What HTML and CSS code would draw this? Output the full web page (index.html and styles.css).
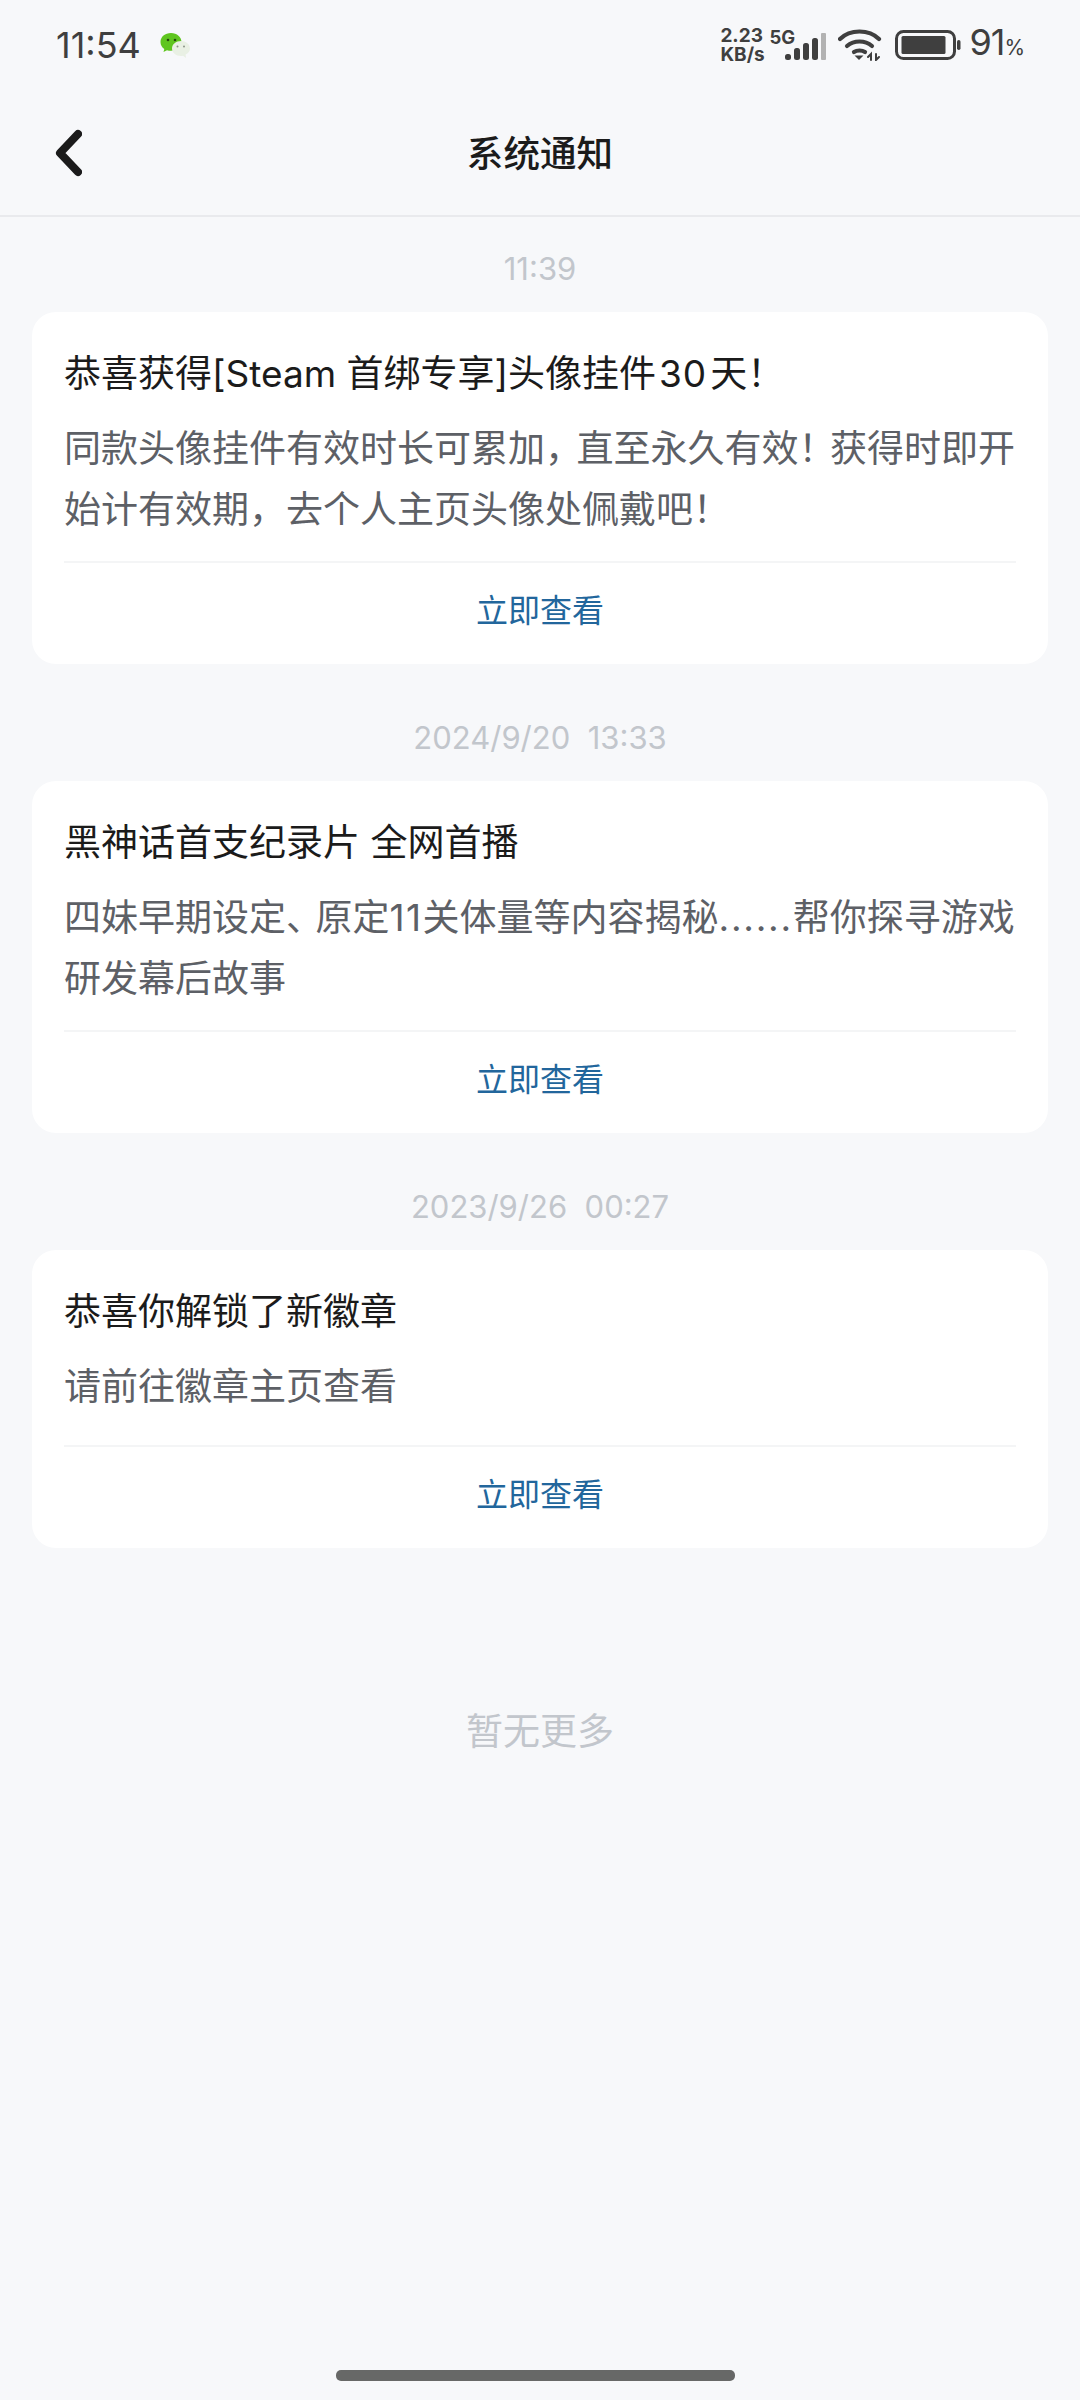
FILE: index.html
```html
<!DOCTYPE html>
<html lang="zh-CN">
<head>
<meta charset="utf-8">
<title>系统通知</title>
<link rel="stylesheet" href="styles.css">
</head>
<body>
<div class="status">
  <div class="status-left">
    <span class="clock">11:54</span>
    <svg class="wechat" width="32" height="28" viewBox="0 0 32 28">
      <path d="M11 1C5 1 .5 4.800.5 10c0 3 1.500 5.400 3.800 7l-.8 3 3.500-1.800c1.200.4 2.500.6 4 .6 6 0 10.500-4 10.500-8.800S17 1 11 1z" fill="#5fc51f"/>
      <circle cx="8" cy="8" r="1.300" fill="#24480c"/><circle cx="15" cy="8" r="1.300" fill="#24480c"/>
      <path d="M21 9c-5 0-9 3.400-9 7.500S16 24 21 24c.7 0 1.400-.1 2-.3l3 2.300-.4-3.400c2.700-1.300 4.400-3.400 4.400-6.100C30 12.400 26 9 21 9z" fill="#e9f0e4"/>
      <circle cx="17.500" cy="14.500" r="1" fill="#8c9488"/><circle cx="24" cy="14.500" r="1" fill="#8c9488"/>
    </svg>
  </div>
  <div class="status-right">
    <div class="speed"><span>2.23</span><span>KB/s</span></div>
    <div class="signal">
      <span class="net">5G</span>
      <svg width="41" height="27" viewBox="0 0 41 27" class="bars">
        <rect x="0" y="21" width="6" height="6" rx="2.500" fill="#3f3f3f"/>
        <rect x="9" y="15" width="6" height="12" rx="2.500" fill="#3f3f3f"/>
        <rect x="18" y="10" width="6" height="17" rx="2.500" fill="#3f3f3f"/>
        <rect x="27" y="5" width="6" height="22" rx="2.500" fill="#3f3f3f"/>
        <rect x="36" y="0" width="5" height="27" rx="1" fill="#b2b2b2"/>
      </svg>
    </div>
    <svg class="wifi" width="44" height="32" viewBox="0 0 44 32" fill="none" stroke="#3f3f3f" stroke-width="4.200" stroke-linecap="round">
      <path d="M2 10C12 0 31 0 41 10"/>
      <path d="M9 17c7-6 18-6 25 0"/>
      <path d="M16 23c3-2 8-2 11 0"/>
      <path d="M16.500 26.500h9l-4.500 4.500z" fill="#3f3f3f" stroke="none"/>
      <path d="M33 31v-6l-3 3M38 25v6l3-3" stroke-width="2"/>
    </svg>
    <svg class="battery" width="66" height="30" viewBox="0 0 66 30">
      <rect x="1.500" y="1.500" width="58" height="27" rx="7" fill="none" stroke="#3f3f3f" stroke-width="3"/>
      <rect x="6.500" y="6" width="44" height="18" rx="1.500" fill="#3f3f3f"/>
      <rect x="62" y="10" width="3.500" height="10" rx="1.700" fill="#3f3f3f"/>
    </svg>
    <div class="percent">91<span>%</span></div>
  </div>
</div>

<header class="nav">
  <svg class="back" width="28" height="48" viewBox="0 0 28 48" fill="none" stroke="#1b1b1b" stroke-width="8" stroke-linecap="round" stroke-linejoin="round">
    <path d="M24 5L6 24 24 43"/>
  </svg>
  <h1 class="nav-title">系统通知</h1>
</header>

<main class="list">
  <section class="item">
    <time class="stamp">11:39</time>
    <article class="card">
      <h2 class="card-title">恭喜获得[Steam 首绑专享]头像挂件<span class="num">30</span>天！</h2>
      <p class="card-body">
        <span class="line">同款头像挂件有效时长可累加<span class="tight">，</span>直至永久有效<span class="tight">！</span>获得时即开</span>
        <span class="line">始计有效期，去个人主页头像处佩戴吧！</span>
      </p>
      <a class="card-link">立即查看</a>
    </article>
  </section>
  <section class="item">
    <time class="stamp">2024/9/20&nbsp; 13:33</time>
    <article class="card">
      <h2 class="card-title">黑神话首支纪录片 全网首播</h2>
      <p class="card-body">
        <span class="line">四妹早期设定<span class="tighter">、</span>原定<span class="eleven">11</span>关体量等内容揭秘<span class="dots">......</span>帮你探寻游戏</span>
        <span class="line">研发幕后故事</span>
      </p>
      <a class="card-link">立即查看</a>
    </article>
  </section>
  <section class="item">
    <time class="stamp">2023/9/26&nbsp; 00:27</time>
    <article class="card">
      <h2 class="card-title">恭喜你解锁了新徽章</h2>
      <p class="card-body card-body-single">请前往徽章主页查看</p>
      <a class="card-link">立即查看</a>
    </article>
  </section>
  <p class="end">暂无更多</p>
</main>

<div class="home-bar"></div>
</body>
</html>
```
FILE: styles.css
```css
* { box-sizing: border-box; }
html, body { margin: 0; padding: 0; }
body {
  width: 1080px;
  height: 2400px;
  background: #f7f8fa;
  font-family: Inter, "Noto Sans CJK SC", "Noto Sans", sans-serif;
  display: flex;
  flex-direction: column;
  overflow: hidden;
}
.status {
  height: 92px;
  padding: 22px 0 0 56px;
  display: flex;
  justify-content: space-between;
  align-items: flex-start;
  color: #3f3f3f;
}
.status-left { display: flex; align-items: center; gap: 19px; height: 46px; }
.clock { font-size: 36px; line-height: 46px; color: #3f3f3f; }
.wechat { margin-top: 2px; }
.status-right { display: flex; align-items: center; height: 46px; padding-right: 55px; }
.speed {
  display: flex; flex-direction: column;
  font-weight: 700; font-size: 19px; line-height: 19px;
  width: 49px;
}
.signal { position: relative; width: 57px; height: 32px; margin-right: 12px; }
.net {
  position: absolute; left: 0; top: -1px;
  font-weight: 700; font-size: 18.500px; line-height: 18px;
}
.bars { position: absolute; right: 0; top: 4px; }
.wifi { margin-right: 13px; }
.battery { margin-right: 8px; }
.percent { font-size: 36px; line-height: 46px; letter-spacing: -1px; }
.percent span { font-size: 21px; letter-spacing: 0; }

.nav {
  height: 125px;
  border-bottom: 2px solid #e9eaed;
  display: flex;
  align-items: center;
  justify-content: center;
  position: relative;
}
.back { position: absolute; left: 54px; top: 37px; }
.nav-title { margin: 0; font-size: 36.600px; font-weight: 500; color: #1b1b1b; line-height: 48px; }

.list { padding: 7px 32px 0; flex: 1; }
.item { display: flex; flex-direction: column; }
.item + .item { margin-top: 29px; }
.stamp {
  height: 88px;
  padding-top: 25px;
  text-align: center;
  font-size: 31px;
  line-height: 40px;
  color: #c2c6cc;
}
.card {
  background: #fff;
  border-radius: 24px;
  padding: 40px 32px 0;
}
.card-title { margin: 0 0 24px; padding-top: 1px; height: 42px; font-size: 37px; font-weight: 400; line-height: 42px; color: #1b1b1b; }
.num { letter-spacing: 1px; padding: 0 3px; }
.card-body { margin: 0; font-size: 37px; line-height: 61px; color: #5d6066; padding-bottom: 21px; }
.line { display: block; white-space: nowrap; }
.tight { letter-spacing: -5.500px; }
.tighter { letter-spacing: -7.500px; }
.eleven { letter-spacing: 1.500px; }
.dots { letter-spacing: 1.700px; }
.card-body-single { padding-bottom: 28px; }
.card-link {
  display: block;
  border-top: 2px solid #f4f5f6;
  height: 103px;
  text-align: center;
  font-size: 32px;
  line-height: 96px;
  color: #22669c;
}
.end { margin: 160px 0 0; text-align: center; font-size: 37px; line-height: 48px; color: #c2c6cc; }
.home-bar {
  position: absolute;
  left: 336px; top: 2370px;
  width: 399px; height: 11px;
  border-radius: 5px;
  background: #676867;
}
```
